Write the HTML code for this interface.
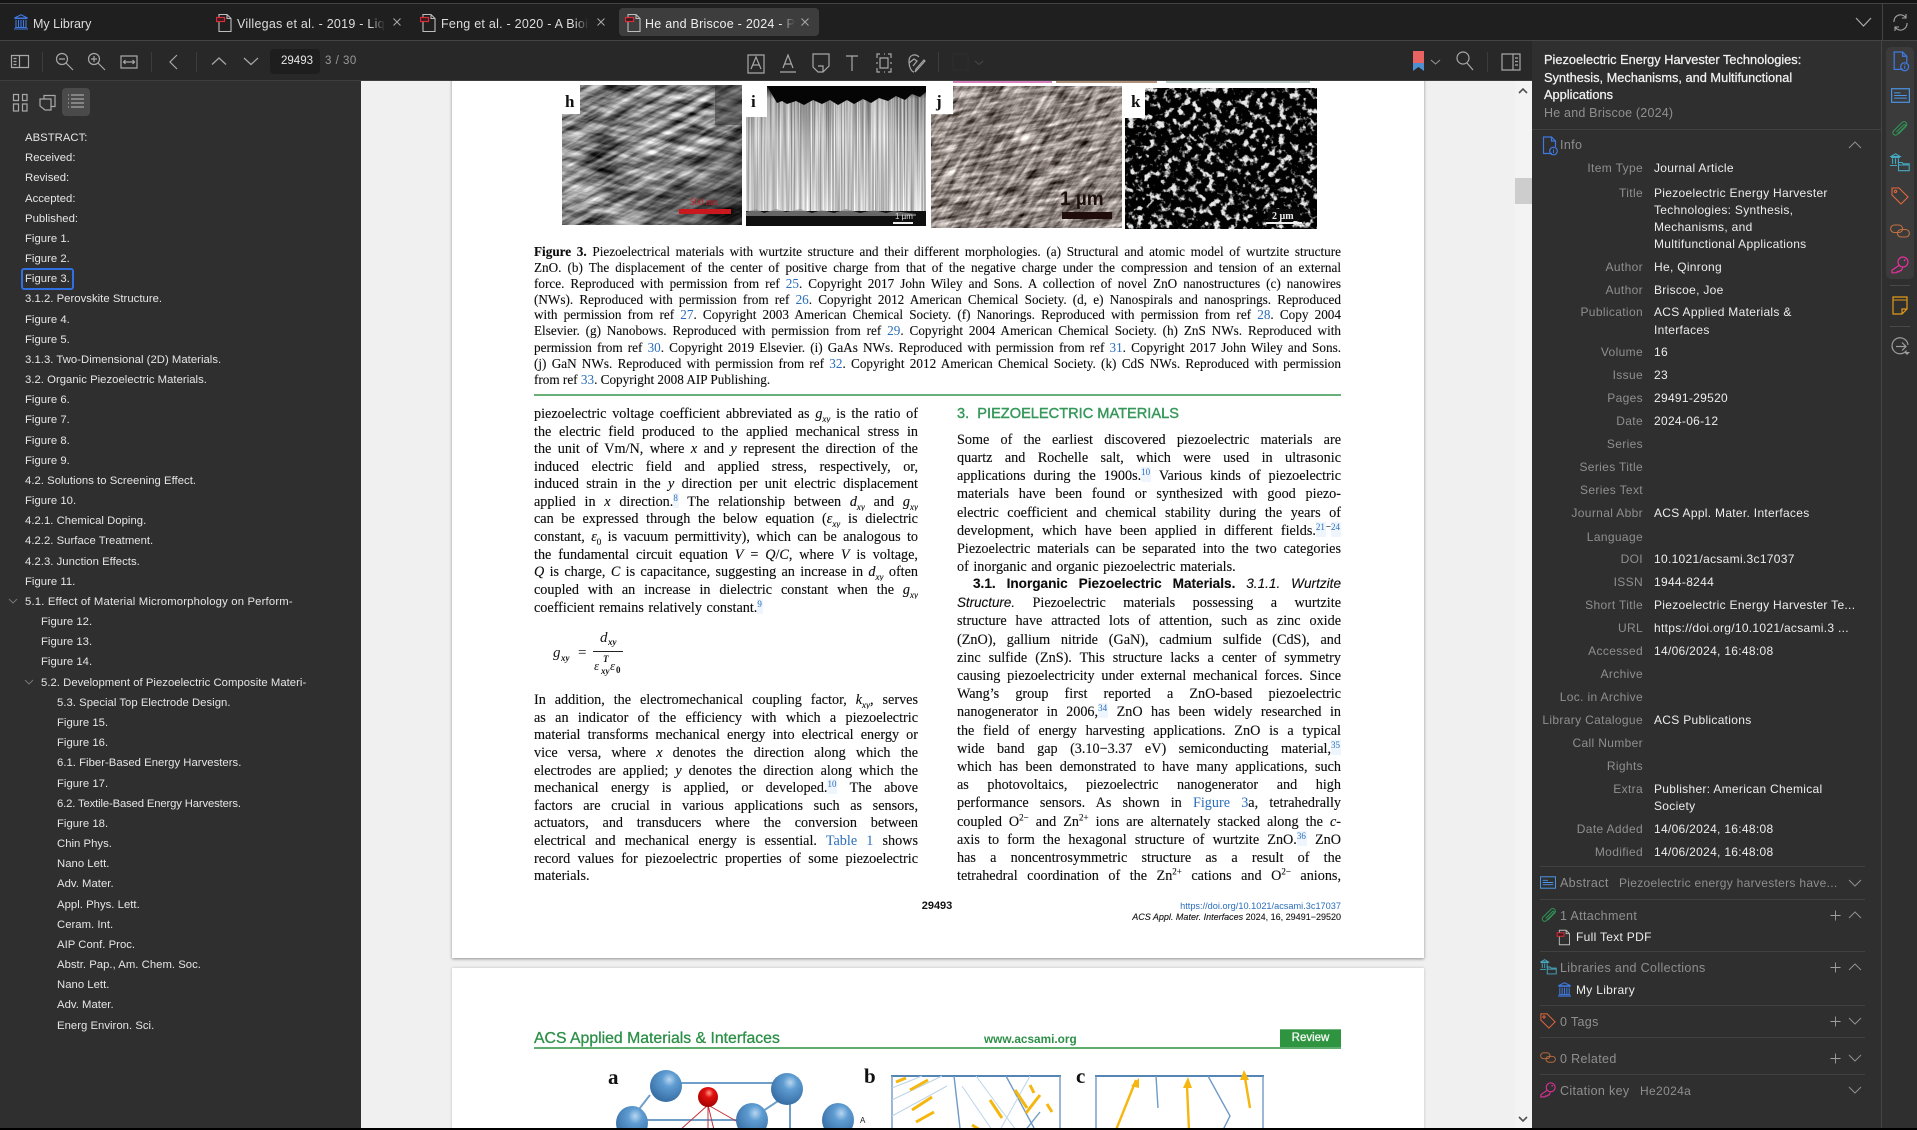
<!DOCTYPE html>
<html><head><meta charset="utf-8"><title>He and Briscoe - 2024</title>
<style>
html,body{margin:0;padding:0;background:#000}
#root{position:relative;width:1917px;height:1130px;overflow:hidden;background:#f0f0f0;font-family:"Liberation Sans",sans-serif;font-size:12px;color:#eee}
.a{position:absolute}
.t{position:absolute;white-space:nowrap;line-height:16px}
svg{position:absolute;overflow:visible}
.ic{fill:none;stroke:#a8a8a8;stroke-width:1.2}
#side div{height:20.18px;line-height:20.18px;font-size:11.3px;letter-spacing:.03px;color:#e6e6e6;white-space:nowrap}
.lb{position:absolute;left:1532px;width:111px;text-align:right;color:#8f8f8f;line-height:16px;white-space:nowrap;letter-spacing:.35px}
.v{position:absolute;left:1654px;color:#ededed;line-height:16px;white-space:nowrap;letter-spacing:.3px}
.sec{position:absolute;left:1560px;color:#8f8f8f;line-height:16px;font-size:12.5px;white-space:nowrap;letter-spacing:.35px}
.hr{position:absolute;left:1540px;width:325px;height:1px;background:#414141}
.l{position:absolute;height:18px;margin-top:1px;line-height:18px;font-family:"Liberation Serif",serif;font-size:14.2px;color:#0c0c0c;-webkit-text-stroke:.12px #0c0c0c;text-align:justify;text-align-last:justify;overflow:hidden;white-space:normal}
.L{left:534px;width:384px}.R{left:957px;width:384px}
.n{text-align-last:left}
.c{position:absolute;left:534px;width:807px;height:16px;line-height:16px;font-family:"Liberation Serif",serif;font-size:13.2px;color:#0c0c0c;-webkit-text-stroke:.1px #0c0c0c;text-align:justify;text-align-last:justify;overflow:hidden}
.b{color:#2a6ebb;-webkit-text-stroke:0}
s.r{text-decoration:none;font-size:9px;color:#2a6ebb;-webkit-text-stroke:0;background:#eef5fc;position:relative;top:-5px;line-height:0;padding:3px 1px 5px 0}
i sub,sub{font-size:9px;line-height:0}
sup{font-size:9px;line-height:0}
</style></head><body><div id="root">

<svg width="0" height="0" style="position:absolute">
<defs>
<filter id="fh" x="0" y="0" width="100%" height="100%" color-interpolation-filters="sRGB"><feTurbulence type="fractalNoise" baseFrequency=".16 .022" numOctaves="4" seed="4"/><feColorMatrix type="matrix" values="2 0 0 0 -.47 2 0 0 0 -.47 2 0 0 0 -.47 0 0 0 0 1"/></filter>
<filter id="fi" x="0" y="0" width="100%" height="100%" color-interpolation-filters="sRGB"><feTurbulence type="fractalNoise" baseFrequency=".7 .006" numOctaves="2" seed="8"/><feColorMatrix type="matrix" values="1 0 0 0 .28 1 0 0 0 .28 1 0 0 0 .28 0 0 0 0 1"/></filter>
<filter id="fj" x="0" y="0" width="100%" height="100%" color-interpolation-filters="sRGB"><feTurbulence type="fractalNoise" baseFrequency=".24 .04" numOctaves="4" seed="11"/><feColorMatrix type="matrix" values="1.7 0 0 0 -.29 1.7 0 0 0 -.33 1.7 0 0 0 -.35 0 0 0 0 1"/></filter>
<filter id="fk" x="0" y="0" width="100%" height="100%" color-interpolation-filters="sRGB"><feTurbulence type="fractalNoise" baseFrequency=".14" numOctaves="3" seed="21"/><feColorMatrix type="matrix" values="6 0 0 0 -3.15 6 0 0 0 -3.15 6 0 0 0 -3.15 0 0 0 0 1"/></filter>
<clipPath id="ch"><rect x="562" y="85" width="180" height="140"/></clipPath>
<clipPath id="cj"><rect x="931" y="86" width="191" height="142"/></clipPath>
<symbol id="pdf" viewBox="0 0 17 20"><path d="M3 1.5h8l4 4v13H3z" fill="none" stroke="#bdbdbd" stroke-width="1.1"/><path d="M11 1.5v4h4" fill="none" stroke="#bdbdbd" stroke-width="1.1"/><rect x=".5" y="4.5" width="8" height="4" fill="#3a1a1c" stroke="#d92b3a" stroke-width="1.2"/></symbol>
<symbol id="lib" viewBox="0 0 16 16"><path d="M8 .8 1.5 4h13zM1.5 4.6h13M3 6v7M5.5 6v7M8 6v7M10.5 6v7M13 6v7M1 15h14M2 13.5h12" fill="none" stroke="#3f78e0" stroke-width="1.1"/></symbol>
<symbol id="up" viewBox="0 0 14 8"><path d="M1 7l6-6 6 6" fill="none" stroke="#8f8f8f" stroke-width="1"/></symbol>
<symbol id="dn" viewBox="0 0 14 8"><path d="M1 1l6 6 6-6" fill="none" stroke="#8f8f8f" stroke-width="1"/></symbol>
<symbol id="pl" viewBox="0 0 12 12"><path d="M6 .5v11M.5 6h11" stroke="#a0a0a0" stroke-width="1"/></symbol>
<symbol id="x" viewBox="0 0 8 8"><path d="M.5.5l7 7M7.500.5l-7 7" stroke="#aaa" stroke-width="1"/></symbol>
<symbol id="info" viewBox="0 0 16 20"><path d="M10 17.5H1.5V1h8l4 4v6M9.5 1v4h4" fill="none" stroke="#3f78e0" stroke-width="1.2"/><circle cx="11.5" cy="15" r="3.8" fill="none" stroke="#3f78e0" stroke-width="1.2"/><path d="M11.5 14v3M11.5 12.6v.8" stroke="#3f78e0"/></symbol>
<symbol id="abs" viewBox="0 0 18 14"><rect x=".6" y=".6" width="16.8" height="12.8" fill="none" stroke="#4c97e8" stroke-width="1.1"/><path d="M3 4.5h6M3 7h12M3 9.5h12" stroke="#4c97e8" stroke-width="1"/></symbol>
<symbol id="clip" viewBox="0 0 18 18"><path d="M6 12 13 5c1.300-1.300 2.700.2 1.500 1.500L6.500 14.500c-2 2-5.500-1-3.500-3.500L11.500 2.500c2.500-2.500 6.500.8 4 3.800L8 14" fill="none" stroke="#2f9455" stroke-width="1.1"/></symbol>
<symbol id="col" viewBox="0 0 20 19"><path d="M5.5.8 1 3.4h9zM1 4.4h9M2.6 5.4v5.5M5.5 5.4v5.5M8.4 5.4v5.5M0 12.5h7" fill="none" stroke="#46a8c0" stroke-width="1.1"/><path d="M8.5 17.7V9.5h3.5l1.2 1.3h6v6.9z M8.5 12h10.7" fill="none" stroke="#46a8c0" stroke-width="1.1"/></symbol>
<symbol id="tag" viewBox="0 0 18 18"><path d="M1 1h7l9 9-7 7-9-9zM4.5 3.2a1.2 1.2 0 1 0 .01 0" fill="none" stroke="#e4683c" stroke-width="1.1"/></symbol>
<symbol id="rel" viewBox="0 0 20 14"><rect x=".6" y="1" width="12" height="7.500" rx="3.750" fill="none" stroke="#c2703f" stroke-width="1.1"/><rect x="7.400" y="5.500" width="12" height="7.500" rx="3.750" fill="none" stroke="#c2703f" stroke-width="1.1"/></symbol>
<symbol id="key" viewBox="0 0 18 18"><circle cx="12" cy="6" r="5" fill="none" stroke="#e6319c" stroke-width="1.2"/><circle cx="13.700" cy="4.300" r=".9" fill="#e6319c"/><path d="M8.300 9.200 1 14.200v2.600h4.300l1.200-1.300 1.300.5 1.200-1.500 1.300.2 1.300-3" fill="none" stroke="#e6319c" stroke-width="1.2"/></symbol>
</defs></svg>

<!-- PDF pages -->
<div class="a" style="left:361px;top:81px;width:1171px;height:1049px;background:#f0f0f0"></div>
<div class="a" style="left:1515px;top:81px;width:17px;height:1049px;background:#f3f3f3"></div>
<div class="a" style="left:1515px;top:178px;width:17px;height:26px;background:#cdcdcd"></div>
<svg style="left:1518px;top:87px" width="10" height="7"><path d="M1 6 5 2l4 4" fill="none" stroke="#505050" stroke-width="1.6"/></svg>
<svg style="left:1518px;top:1116px" width="10" height="7"><path d="M1 1l4 4 4-4" fill="none" stroke="#505050" stroke-width="1.6"/></svg>

<div class="a" style="left:452px;top:70px;width:972px;height:888px;background:#fff;box-shadow:0 1px 3px rgba(0,0,0,.4)"></div>
<div class="a" style="left:452px;top:968px;width:972px;height:170px;background:#fff;box-shadow:0 0 3px rgba(0,0,0,.2)"></div>

<!-- top strip previous figure -->
<div class="a" style="left:953px;top:81px;width:99px;height:2px;background:#d580bb"></div>
<div class="a" style="left:1056px;top:81px;width:101px;height:2px;background:#b09078"></div>
<div class="a" style="left:1166px;top:81px;width:144px;height:2px;background:#b8c8c0"></div>

<!-- figure images -->
<svg style="left:0;top:0" width="1917" height="400">
<defs>
<linearGradient id="gh" x1="0" y1="0" x2="1" y2="1"><stop offset="0" stop-color="#000" stop-opacity="0"/><stop offset=".6" stop-color="#000" stop-opacity=".03"/><stop offset="1" stop-color="#000" stop-opacity=".68"/></linearGradient>
<linearGradient id="gi" x1="0" y1="0" x2="0" y2="1"><stop offset="0" stop-color="#000" stop-opacity=".9"/><stop offset=".1" stop-color="#000" stop-opacity=".2"/><stop offset=".4" stop-color="#000" stop-opacity=".05"/><stop offset="1" stop-color="#fff" stop-opacity=".12"/></linearGradient>
</defs>
<g clip-path="url(#ch)">
<rect x="562" y="85" width="180" height="140" fill="#808080"/>
<rect x="482" y="-15" width="340" height="340" transform="rotate(62 652 155)" filter="url(#fh)"/>
<rect x="482" y="-15" width="340" height="340" transform="rotate(100 652 155)" filter="url(#fh)" opacity=".4"/>
<rect x="562" y="85" width="180" height="140" fill="url(#gh)"/>
<rect x="715" y="85" width="27" height="40" fill="#222" opacity=".45"/>
</g>
<rect x="562" y="85" width="18" height="29" fill="#fff"/>
<rect x="679" y="209" width="52" height="5" fill="#c9181e"/>
<text x="690" y="205" font-family="Liberation Serif,serif" font-size="9" fill="#c9181e">500 nm</text>

<rect x="746" y="86" width="180" height="140" filter="url(#fi)"/>
<rect x="746" y="86" width="180" height="128" fill="url(#gi)"/>
<path d="M767 86h159v6l-6 5-8-3-7 6-9-4-8 5-9-3-8 5-8-4-9 5-7-4-9 5-8-5-8 4-9-4-9 5-8-4-9 3-5-3-5 2z" fill="#050505"/>
<rect x="746" y="211" width="180" height="15" fill="#0f0f0f"/>
<path d="M746 212l10-3 8 4 12-4 10 3 14-3 12 4 10-3 12 3 12-4 14 4 14-3 12 3 8-2 22 3v2H746z" fill="#8d8d8d" opacity=".7"/>
<rect x="746" y="86" width="21" height="31" fill="#fff"/>
<rect x="893" y="222" width="20" height="2" fill="#eee"/>
<text x="895" y="219" font-family="Liberation Sans,sans-serif" font-size="8" fill="#ddd">1 µm</text>

<g clip-path="url(#cj)">
<rect x="931" y="86" width="191" height="142" fill="#8f8580"/>
<rect x="846" y="-43" width="360" height="360" transform="rotate(78 1026 137)" filter="url(#fj)"/>
<rect x="846" y="-43" width="360" height="360" transform="rotate(35 1026 137)" filter="url(#fj)" opacity=".45"/>
</g>
<rect x="931" y="86" width="22" height="28" fill="#fff"/>
<text x="1060" y="205" font-family="Liberation Sans,sans-serif" font-size="19" fill="#1c0f0c" font-weight="bold">1 µm</text>
<rect x="1062" y="212" width="50" height="7" fill="#200c0b"/>

<rect x="1125" y="88" width="192" height="141" fill="#0b0b0b"/>
<rect x="1125" y="88" width="192" height="141" filter="url(#fk)" opacity=".9"/>
<rect x="1125" y="88" width="20" height="30" fill="#fff"/>
<rect x="1266" y="222" width="36" height="2" fill="#eee"/>
<rect x="1268" y="209" width="32" height="12" fill="#0b0b0b"/>
<text x="1272" y="219" font-family="Liberation Serif,serif" font-weight="bold" font-size="10" fill="#eee">2 µm</text>

<g font-family="Liberation Serif,serif" font-weight="bold" font-size="17" fill="#111">
<text x="565" y="107">h</text><text x="751" y="107">i</text><text x="936" y="107">j</text><text x="1131" y="107">k</text></g>
<rect x="534" y="394" width="807" height="2" fill="#68b078"/>
</svg>

<!-- caption -->
<div class="c" style="top:244px"><b>Figure 3.</b> Piezoelectrical materials with wurtzite structure and their different morphologies. (a) Structural and atomic model of wurtzite structure</div>
<div class="c" style="top:260px">ZnO. (b) The displacement of the center of positive charge from that of the negative charge under the compression and tension of an external</div>
<div class="c" style="top:276px">force. Reproduced with permission from ref <span class="b">25</span>. Copyright 2017 John Wiley and Sons. A collection of novel ZnO nanostructures (c) nanowires</div>
<div class="c" style="top:292px">(NWs). Reproduced with permission from ref <span class="b">26</span>. Copyright 2012 American Chemical Society. (d, e) Nanospirals and nanosprings. Reproduced</div>
<div class="c" style="top:307px">with permission from ref <span class="b">27</span>. Copyright 2003 American Chemical Society. (f) Nanorings. Reproduced with permission from ref <span class="b">28</span>. Copy 2004</div>
<div class="c" style="top:323px">Elsevier. (g) Nanobows. Reproduced with permission from ref <span class="b">29</span>. Copyright 2004 American Chemical Society. (h) ZnS NWs. Reproduced with</div>
<div class="c" style="top:340px">permission from ref <span class="b">30</span>. Copyright 2019 Elsevier. (i) GaAs NWs. Reproduced with permission from ref <span class="b">31</span>. Copyright 2017 John Wiley and Sons.</div>
<div class="c" style="top:356px">(j) GaN NWs. Reproduced with permission from ref <span class="b">32</span>. Copyright 2012 American Chemical Society. (k) CdS NWs. Reproduced with permission</div>
<div class="c" style="top:372px;text-align-last:left">from ref <span class="b">33</span>. Copyright 2008 AIP Publishing.</div>

<!-- left column -->
<div class="l L" style="top:404px">piezoelectric voltage coefficient abbreviated as <i>g<sub>xy</sub></i> is the ratio of</div>
<div class="l L" style="top:422px">the electric field produced to the applied mechanical stress in</div>
<div class="l L" style="top:439px">the unit of Vm/N, where <i>x</i> and <i>y</i> represent the direction of the</div>
<div class="l L" style="top:457px">induced electric field and applied stress, respectively, or,</div>
<div class="l L" style="top:474px">induced strain in the <i>y</i> direction per unit electric displacement</div>
<div class="l L" style="top:492px">applied in <i>x</i> direction.<s class="r">8</s> The relationship between <i>d<sub>xy</sub></i> and <i>g<sub>xy</sub></i></div>
<div class="l L" style="top:509px">can be expressed through the below equation (<i>ε<sub>xy</sub></i> is dielectric</div>
<div class="l L" style="top:527px">constant, <i>ε</i><sub>0</sub> is vacuum permittivity), which can be analogous to</div>
<div class="l L" style="top:545px">the fundamental circuit equation <i>V</i> = <i>Q</i>/<i>C</i>, where <i>V</i> is voltage,</div>
<div class="l L" style="top:562px"><i>Q</i> is charge, <i>C</i> is capacitance, suggesting an increase in <i>d<sub>xy</sub></i> often</div>
<div class="l L" style="top:580px">coupled with an increase in dielectric constant when the <i>g<sub>xy</sub></i></div>
<div class="l L n" style="top:598px;word-spacing:1px">coefficient remains relatively constant.<s class="r">9</s></div>

<svg style="left:0;top:0" width="1917" height="700" font-family="Liberation Serif,serif" fill="#151515">
<text x="553" y="657" font-size="15" font-style="italic">g</text><text x="561" y="661" font-size="9" font-style="italic" font-weight="bold">xy</text>
<text x="578" y="657" font-size="15">=</text>
<text x="600" y="642" font-size="15" font-style="italic">d</text><text x="608" y="645" font-size="9" font-style="italic" font-weight="bold">xy</text>
<rect x="593" y="651" width="30" height="1" fill="#222"/>
<text x="594" y="670" font-size="13" font-style="italic">ε</text><text x="603" y="662" font-size="9" font-style="italic" font-weight="bold">T</text><text x="601" y="674" font-size="9" font-style="italic" font-weight="bold">xy</text><text x="610" y="670" font-size="13" font-style="italic">ε</text><text x="616" y="673" font-size="9" font-weight="bold">0</text>
</svg>

<div class="l L" style="top:690px">In addition, the electromechanical coupling factor, <i>k<sub>xy</sub></i>, serves</div>
<div class="l L" style="top:708px">as an indicator of the efficiency with which a piezoelectric</div>
<div class="l L" style="top:725px">material transforms mechanical energy into electrical energy or</div>
<div class="l L" style="top:743px">vice versa, where <i>x</i> denotes the direction along which the</div>
<div class="l L" style="top:761px">electrodes are applied; <i>y</i> denotes the direction along which the</div>
<div class="l L" style="top:778px">mechanical energy is applied, or developed.<s class="r">10</s> The above</div>
<div class="l L" style="top:796px">factors are crucial in various applications such as sensors,</div>
<div class="l L" style="top:813px">actuators, and transducers where the conversion between</div>
<div class="l L" style="top:831px">electrical and mechanical energy is essential. <span class="b">Table 1</span> shows</div>
<div class="l L" style="top:849px">record values for piezoelectric properties of some piezoelectric</div>
<div class="l L n" style="top:866px">materials.</div>

<!-- right column -->
<div class="t" style="left:957px;top:405px;line-height:18px;font-size:14.6px;color:#36985a;-webkit-text-stroke:.4px #36985a">3.&nbsp; PIEZOELECTRIC MATERIALS</div>
<div class="l R" style="top:430px">Some of the earliest discovered piezoelectric materials are</div>
<div class="l R" style="top:448px">quartz and Rochelle salt, which were used in ultrasonic</div>
<div class="l R" style="top:466px">applications during the 1900s.<s class="r">10</s> Various kinds of piezoelectric</div>
<div class="l R" style="top:484px">materials have been found or synthesized with good piezo-</div>
<div class="l R" style="top:503px">electric coefficient and chemical stability during the years of</div>
<div class="l R" style="top:521px">development, which have been applied in different fields.<s class="r">21</s><sup>−</sup><s class="r">24</s></div>
<div class="l R" style="top:539px">Piezoelectric materials can be separated into the two categories</div>
<div class="l R n" style="top:557px;word-spacing:1px">of inorganic and organic piezoelectric materials.</div>
<div class="l R" style="top:574px;padding-left:16px;width:368px;font-family:'Liberation Sans',sans-serif;font-size:13.6px"><b>3.1. Inorganic Piezoelectric Materials.</b> <i>3.1.1. Wurtzite</i></div>
<div class="l R" style="top:593px"><i style="font-family:'Liberation Sans',sans-serif;font-size:13.4px">Structure.</i> Piezoelectric materials possessing a wurtzite</div>
<div class="l R" style="top:611px">structure have attracted lots of attention, such as zinc oxide</div>
<div class="l R" style="top:630px">(ZnO), gallium nitride (GaN), cadmium sulfide (CdS), and</div>
<div class="l R" style="top:648px">zinc sulfide (ZnS). This structure lacks a center of symmetry</div>
<div class="l R" style="top:666px">causing piezoelectricity under external mechanical forces. Since</div>
<div class="l R" style="top:684px">Wang’s group first reported a ZnO-based piezoelectric</div>
<div class="l R" style="top:702px">nanogenerator in 2006,<s class="r">34</s> ZnO has been widely researched in</div>
<div class="l R" style="top:721px">the field of energy harvesting applications. ZnO is a typical</div>
<div class="l R" style="top:739px">wide band gap (3.10−3.37 eV) semiconducting material,<s class="r">35</s></div>
<div class="l R" style="top:757px">which has been demonstrated to have many applications, such</div>
<div class="l R" style="top:775px">as photovoltaics, piezoelectric nanogenerator and high</div>
<div class="l R" style="top:793px">performance sensors. As shown in <span class="b">Figure 3</span>a, tetrahedrally</div>
<div class="l R" style="top:812px">coupled O<sup>2−</sup> and Zn<sup>2+</sup> ions are alternately stacked along the <i>c</i>-</div>
<div class="l R" style="top:830px">axis to form the hexagonal structure of wurtzite ZnO.<s class="r">36</s> ZnO</div>
<div class="l R" style="top:848px">has a noncentrosymmetric structure as a result of the</div>
<div class="l R" style="top:866px">tetrahedral coordination of the Zn<sup>2+</sup> cations and O<sup>2−</sup> anions,</div>

<!-- footer -->
<div class="t" style="left:900px;width:74px;text-align:center;top:898px;font-size:11px;font-weight:bold;color:#111">29493</div>
<div class="t" style="left:1000px;width:341px;text-align:right;top:898px;font-size:9.2px;color:#2a6ebb">https://doi.org/10.1021/acsami.3c17037</div>
<div class="t" style="left:1000px;width:341px;text-align:right;top:909px;font-size:9px;color:#111;-webkit-text-stroke:.1px #111"><i>ACS Appl. Mater. Interfaces</i> 2024, 16, 29491−29520</div>

<!-- page 2 -->
<div class="t" style="left:534px;top:1031px;font-size:15.8px;color:#2c8f48;-webkit-text-stroke:.3px #2c8f48">ACS Applied Materials &amp; Interfaces</div>
<div class="t" style="left:984px;top:1031px;font-size:11.8px;color:#2c8f48;font-weight:bold">www.acsami.org</div>
<div class="a" style="left:1280px;top:1029px;width:61px;height:18px;background:#2e9440;border-top:1px solid #6fb57f;box-sizing:border-box"></div>
<div class="t" style="left:1280px;width:61px;text-align:center;top:1030px;font-size:11.5px;color:#f3f8f3;-webkit-text-stroke:.3px #f3f8f3">Review</div>
<div class="a" style="left:534px;top:1047px;width:807px;height:2px;background:#5fae6f"></div>
<svg style="left:0;top:0" width="1917" height="1130">
<defs><radialGradient id="sb" cx=".6" cy=".3" r=".75"><stop offset="0" stop-color="#b8d6f0"/><stop offset=".3" stop-color="#5e9cd2"/><stop offset="1" stop-color="#33699f"/></radialGradient>
<radialGradient id="sr" cx=".55" cy=".3" r=".75"><stop offset="0" stop-color="#ff9a8a"/><stop offset=".3" stop-color="#e01010"/><stop offset="1" stop-color="#a00000"/></radialGradient></defs>
<g font-family="Liberation Serif,serif" font-weight="bold" font-size="21" fill="#111"><text x="608" y="1084">a</text><text x="864" y="1083">b</text><text x="1076" y="1083">c</text></g>
<g stroke="#6f9fc9" stroke-width="2" fill="none"><path d="M666 1083h121M632 1120h120M650 1095l-14 18M787 1095l-30 20M790 1100v30"/></g>
<path d="M708 1105 680 1130M708 1105l44 25M708 1105v25M708 1105l6 25" stroke="#c0323a" fill="none"/>
<ellipse cx="666" cy="1086" rx="16" ry="16" fill="url(#sb)"/><ellipse cx="787" cy="1089" rx="16" ry="16" fill="url(#sb)"/>
<ellipse cx="632" cy="1123" rx="16" ry="17" fill="url(#sb)"/><ellipse cx="752" cy="1120" rx="16" ry="17" fill="url(#sb)"/><ellipse cx="838" cy="1120" rx="16" ry="17" fill="url(#sb)"/>
<ellipse cx="708" cy="1097" rx="10" ry="10" fill="url(#sr)"/>
<text x="860" y="1123" font-family="Liberation Sans,sans-serif" font-size="8" fill="#222">A</text>
<path d="M891 1076h170M1095 1076h169" stroke="#5585b5" stroke-width="2"/>
<path d="M892 1076v56M1060 1076v56M1096 1076v56M1263 1076v56" stroke="#6f9bc5" stroke-width="1.4" fill="none"/>
<path d="M954 1076l6 52M1006 1076l28 52M1040 1112l-16 20M1156 1076l2 32M1208 1076l22 40-8 16" stroke="#6f9bc5" stroke-width="1.4" fill="none"/>
<path d="M892 1088l30-12M892 1100l50-24M892 1116l55-30M962 1086l30 44M976 1076l40 54M1030 1076l-30 54" stroke="#bcd4e6" fill="none"/>
<g stroke="#f5b60f" stroke-width="3" fill="none"><path d="M896 1082l10-4M910 1090l18-10M912 1110l20-13M916 1122l18-10M990 1100l12 18M1015 1090l12 18M1040 1095l-14 18M1030 1085l4 8M1052 1112l-5-8M972 1125l8 5"/></g>
<g stroke="#f5b60f" stroke-width="2.4" fill="none"><path d="M1116 1130l20-50M1189 1130l-2-44M1250 1108l-5-30"/></g>
<path d="M1139 1078l-8 8 8 2zM1183 1088h9l-4-11zM1240 1080h9l-5-10z" fill="#f5b60f"/>
</svg>

<!-- tab bar -->
<div class="a" style="left:0;top:0;width:1917px;height:3px;background:#151515"></div>
<div class="a" style="left:0;top:3px;width:1917px;height:1px;background:#444"></div>
<div class="a" style="left:0;top:4px;width:1917px;height:36px;background:#1f1f1f"></div>
<div class="a" style="left:0;top:40px;width:1917px;height:1px;background:#444"></div>
<div class="a" style="left:619px;top:8px;width:200px;height:28px;border-radius:4px;background:#3d3d3d"></div>
<svg style="left:13px;top:14px" width="16" height="17"><use href="#lib" width="16" height="16"/></svg>
<div class="t" style="left:33px;top:16px;font-size:12.5px;color:#ddd">My Library</div>
<svg style="left:216px;top:13px" width="17" height="20"><use href="#pdf" width="17" height="20"/></svg>
<div class="t" style="left:237px;top:16px;width:148px;overflow:hidden;font-size:12.5px;letter-spacing:.25px;color:#ddd;-webkit-mask-image:linear-gradient(90deg,#000 90%,transparent)">Villegas et al. - 2019 - Liquid crystal</div>
<svg style="left:393px;top:18px" width="8" height="8"><use href="#x" width="8" height="8"/></svg>
<svg style="left:420px;top:13px" width="17" height="20"><use href="#pdf" width="17" height="20"/></svg>
<div class="t" style="left:441px;top:16px;width:148px;overflow:hidden;font-size:12.5px;letter-spacing:.25px;color:#ddd;-webkit-mask-image:linear-gradient(90deg,#000 90%,transparent)">Feng et al. - 2020 - A Bioinspired</div>
<svg style="left:597px;top:18px" width="8" height="8"><use href="#x" width="8" height="8"/></svg>
<svg style="left:625px;top:13px" width="17" height="20"><use href="#pdf" width="17" height="20"/></svg>
<div class="t" style="left:645px;top:16px;width:150px;overflow:hidden;font-size:12.5px;letter-spacing:.25px;color:#eee;-webkit-mask-image:linear-gradient(90deg,#000 90%,transparent)">He and Briscoe - 2024 - Piezoelectric</div>
<svg style="left:801px;top:18px" width="8" height="8"><use href="#x" width="8" height="8"/></svg>
<svg style="left:1855px;top:17px" width="17" height="10"><path d="M1 1l7.5 8L16 1" fill="none" stroke="#aaa" stroke-width="1.2"/></svg>
<div class="a" style="left:1882px;top:4px;width:1px;height:36px;background:#444"></div>
<svg style="left:1892px;top:13px" width="17" height="19"><path d="M2 9A6.5 6.5 0 0 1 13.5 4.2M15 10a6.5 6.5 0 0 1-11.6 4.6M14 1v4h-4M3 18v-4h4" fill="none" stroke="#a5a5a5" stroke-width="1.1"/></svg>

<!-- toolbar -->
<div class="a" style="left:0;top:41px;width:1532px;height:40px;background:#282828"></div>
<div class="a" style="left:0;top:80px;width:1532px;height:1px;background:#3e3e3e"></div>
<svg style="left:0;top:41px" width="1532" height="40">
<g class="ic">
<path d="M11.5 14.5h17v12h-17zM19.5 14.5v12M13.5 17.5h3M13.5 20.5h3M13.5 23.5h3"/>
<circle cx="62" cy="18" r="5.5"/><path d="M66 22l7 7M59 18h6"/>
<circle cx="94" cy="18" r="5.5"/><path d="M98 22l7 7M91 18h6M94 15v6"/>
<path d="M121 15h16v12h-16zM123.5 21h11M125.5 19l-2 2 2 2M132.5 19l2 2-2 2"/>
<path d="M177 14l-7 7 7 7"/>
<path d="M212 23.5l7-6.5 7 6.5M244 17l7 6.500 7-6.500"/>
<path d="M748 14h16v18h-16zM751 28l5-12 5 12M752.500 24h7"/>
<path d="M783 27l5-13 5 13M785 23h6M780 31h16"/>
<path d="M813 13h16v12l-6 6h-5l-5-5zM823 31v-6h-5"/>
<path d="M846 15h12M852 15v15"/>
<path d="M877 17v-4h3M888 13h3v4M891 27v4h-3M880 31h-3v-4M884 13h1M884 31h1M877 21v2M891 21v2M880 17h8v10h-8z"/>
<path d="M919 16c-4-4-10-2-10 4 0 7 3 11 5 11M909 22l5-4 3 2-4 5M925 20l-8 9-2 2 1-3 8-9z"/>
</g>
<g stroke="#3c3c3c"><path d="M42.500 11v20M151.500 11v20M196.500 11v20M938.500 11v20M1487.500 11v20"/></g>
<rect x="953" y="13" width="15" height="16" fill="none" stroke="#2e2e2e"/>
<path d="M975 20l4 3.500 4-3.500" fill="none" stroke="#4a4a4a"/>
<path d="M1413 10h11v20l-5.500-4-5.500 4z" fill="#4d8ed0"/><path d="M1413 10h11v12h-11z" fill="#ea6363"/>
<path d="M1431 19l4.500 4 4.500-4" fill="none" stroke="#999"/>
<g class="ic"><circle cx="1463" cy="17" r="6"/><path d="M1467 22l6 7M1502 13h18v16h-18zM1513 13v16M1515 17h3M1515 20.500h3M1515 24h3"/></g>
</svg>
<div class="a" style="left:270px;top:49px;width:50px;height:25px;border-radius:4px;background:#1e1e1e"></div>
<div class="t" style="left:270px;top:53px;width:43px;text-align:right;font-size:11.5px;color:#e6e6e6">29493</div>
<div class="t" style="left:325px;top:53px;font-size:11.5px;color:#999;letter-spacing:.5px">3 / 30</div>

<!-- left sidebar -->
<div class="a" style="left:0;top:81px;width:361px;height:1047px;background:#2f2f2f"></div>
<div class="a" style="left:62px;top:88px;width:28px;height:28px;border-radius:4px;background:#4a4a4a"></div>
<svg style="left:0;top:81px" width="100" height="40"><g class="ic">
<path d="M13.500 13.500h5v6h-5zM22.500 13.500h4.500v6h-4.500zM13.500 23h5v7h-5zM22.500 23h4.500v7h-4.500z"/>
<path d="M40 18h11v11h-6l-5-4zM44 18v-3.500h11v11h-4"/>
<path d="M71 14h13M71 18h13M71 22h13M71 26h13" stroke-width="1.300"/><path d="M68 14h1M68 18h1M68 22h1M68 26h1"/></g></svg>
<div class="a" style="left:21px;top:268px;width:53px;height:22px;border:2px solid #2f6fe0;border-radius:3px;box-sizing:border-box"></div>
<svg style="left:0;top:0" width="40" height="700"><path d="M9 599l4 4 4-4M25 680l4 4 4-4" fill="none" stroke="#777"/></svg>
<div id="side" class="a" style="left:0;top:128px;width:361px">
<div style="padding-left:25px">ABSTRACT:</div><div style="padding-left:25px">Received:</div><div style="padding-left:25px">Revised:</div><div style="padding-left:25px">Accepted:</div><div style="padding-left:25px">Published:</div><div style="padding-left:25px">Figure 1.</div><div style="padding-left:25px">Figure 2.</div><div style="padding-left:25px">Figure 3.</div><div style="padding-left:25px">3.1.2. Perovskite Structure.</div><div style="padding-left:25px">Figure 4.</div><div style="padding-left:25px">Figure 5.</div><div style="padding-left:25px">3.1.3. Two-Dimensional (2D) Materials.</div><div style="padding-left:25px">3.2. Organic Piezoelectric Materials.</div><div style="padding-left:25px">Figure 6.</div><div style="padding-left:25px">Figure 7.</div><div style="padding-left:25px">Figure 8.</div><div style="padding-left:25px">Figure 9.</div><div style="padding-left:25px">4.2. Solutions to Screening Effect.</div><div style="padding-left:25px">Figure 10.</div><div style="padding-left:25px">4.2.1. Chemical Doping.</div><div style="padding-left:25px">4.2.2. Surface Treatment.</div><div style="padding-left:25px">4.2.3. Junction Effects.</div><div style="padding-left:25px">Figure 11.</div><div style="padding-left:25px;letter-spacing:.17px">5.1. Effect of Material Micromorphology on Perform-</div>
<div style="padding-left:41px">Figure 12.</div><div style="padding-left:41px">Figure 13.</div><div style="padding-left:41px">Figure 14.</div><div style="padding-left:41px">5.2. Development of Piezoelectric Composite Materi-</div>
<div style="padding-left:57px">5.3. Special Top Electrode Design.</div><div style="padding-left:57px">Figure 15.</div><div style="padding-left:57px">Figure 16.</div><div style="padding-left:57px">6.1. Fiber-Based Energy Harvesters.</div><div style="padding-left:57px">Figure 17.</div><div style="padding-left:57px;letter-spacing:-.15px">6.2. Textile-Based Energy Harvesters.</div><div style="padding-left:57px">Figure 18.</div><div style="padding-left:57px">Chin Phys.</div><div style="padding-left:57px">Nano Lett.</div><div style="padding-left:57px">Adv. Mater.</div><div style="padding-left:57px">Appl. Phys. Lett.</div><div style="padding-left:57px">Ceram. Int.</div><div style="padding-left:57px">AIP Conf. Proc.</div><div style="padding-left:57px">Abstr. Pap., Am. Chem. Soc.</div><div style="padding-left:57px">Nano Lett.</div><div style="padding-left:57px">Adv. Mater.</div><div style="padding-left:57px">Energ Environ. Sci.</div>
</div>

<!-- right panel -->
<div class="a" style="left:1532px;top:41px;width:349px;height:1087px;background:#2f2f2f"></div>
<div class="a" style="left:1881px;top:40px;width:1px;height:1088px;background:#444"></div>
<div class="a" style="left:1882px;top:41px;width:35px;height:1087px;background:#2f2f2f"></div>
<div class="a" style="left:1886px;top:47px;width:28px;height:232px;border-radius:5px;background:#3b3b3b"></div>
<div class="a" style="left:1532px;top:129px;width:349px;height:1px;background:#414141"></div>
<div class="t" style="left:1544px;top:51px;font-size:12.8px;line-height:17.500px;color:#f2f2f2;-webkit-text-stroke:.25px #f2f2f2">Piezoelectric Energy Harvester Technologies:<br>Synthesis, Mechanisms, and Multifunctional<br>Applications</div>
<div class="t" style="left:1544px;top:105px;font-size:12.500px;color:#8f8f8f;letter-spacing:.2px">He and Briscoe (2024)</div>
<svg style="left:1542px;top:136px" width="16" height="20"><use href="#info" width="16" height="20"/></svg>
<div class="sec" style="top:137px">Info</div>
<svg style="left:1848px;top:141px" width="14" height="8"><use href="#up" width="14" height="8"/></svg>

<div class="lb" style="top:160px">Item Type</div><div class="v" style="top:160px">Journal Article</div>
<div class="lb" style="top:185px">Title</div><div class="v" style="top:184.500px;line-height:17px">Piezoelectric Energy Harvester<br>Technologies: Synthesis,<br>Mechanisms, and<br>Multifunctional Applications</div>
<div class="lb" style="top:259px">Author</div><div class="v" style="top:259px">He, Qinrong</div>
<div class="lb" style="top:282px">Author</div><div class="v" style="top:282px">Briscoe, Joe</div>
<div class="lb" style="top:304px">Publication</div><div class="v" style="top:304px;line-height:17.500px">ACS Applied Materials &amp;<br>Interfaces</div>
<div class="lb" style="top:344px">Volume</div><div class="v" style="top:344px">16</div>
<div class="lb" style="top:367px">Issue</div><div class="v" style="top:367px">23</div>
<div class="lb" style="top:390px">Pages</div><div class="v" style="top:390px">29491-29520</div>
<div class="lb" style="top:413px">Date</div><div class="v" style="top:413px">2024-06-12</div>
<div class="lb" style="top:436px">Series</div>
<div class="lb" style="top:459px">Series Title</div>
<div class="lb" style="top:482px">Series Text</div>
<div class="lb" style="top:505px">Journal Abbr</div><div class="v" style="top:505px">ACS Appl. Mater. Interfaces</div>
<div class="lb" style="top:529px">Language</div>
<div class="lb" style="top:551px">DOI</div><div class="v" style="top:551px">10.1021/acsami.3c17037</div>
<div class="lb" style="top:574px">ISSN</div><div class="v" style="top:574px">1944-8244</div>
<div class="lb" style="top:597px">Short Title</div><div class="v" style="top:597px">Piezoelectric Energy Harvester Te...</div>
<div class="lb" style="top:620px">URL</div><div class="v" style="top:620px">https://doi.org/10.1021/acsami.3 ...</div>
<div class="lb" style="top:643px">Accessed</div><div class="v" style="top:643px">14/06/2024, 16:48:08</div>
<div class="lb" style="top:666px">Archive</div>
<div class="lb" style="top:689px">Loc. in Archive</div>
<div class="lb" style="top:712px">Library Catalogue</div><div class="v" style="top:712px">ACS Publications</div>
<div class="lb" style="top:735px">Call Number</div>
<div class="lb" style="top:758px">Rights</div>
<div class="lb" style="top:781px">Extra</div><div class="v" style="top:781px;line-height:17px">Publisher: American Chemical<br>Society</div>
<div class="lb" style="top:821px">Date Added</div><div class="v" style="top:821px">14/06/2024, 16:48:08</div>
<div class="lb" style="top:844px">Modified</div><div class="v" style="top:844px">14/06/2024, 16:48:08</div>

<div class="hr" style="top:866px"></div><div class="hr" style="top:899px"></div><div class="hr" style="top:951px"></div><div class="hr" style="top:1005px"></div><div class="hr" style="top:1037px"></div><div class="hr" style="top:1074px"></div>

<svg style="left:1540px;top:876px" width="16" height="13"><use href="#abs" width="16" height="13"/></svg>
<div class="sec" style="top:875px">Abstract</div><div class="sec" style="top:875px;left:1619px;font-size:12px;letter-spacing:.3px">Piezoelectric energy harvesters have...</div>
<svg style="left:1848px;top:879px" width="14" height="8"><use href="#dn" width="14" height="8"/></svg>

<svg style="left:1540px;top:907px" width="17" height="17"><use href="#clip" width="17" height="17"/></svg>
<div class="sec" style="top:908px">1 Attachment</div>
<svg style="left:1830px;top:910px" width="11" height="11"><use href="#pl" width="11" height="11"/></svg>
<svg style="left:1848px;top:911px" width="14" height="8"><use href="#up" width="14" height="8"/></svg>
<svg style="left:1556px;top:929px" width="16" height="17"><use href="#pdf" width="16" height="17"/></svg>
<div class="v" style="top:929px;left:1576px">Full Text PDF</div>

<svg style="left:1540px;top:959px" width="17" height="16"><use href="#col" width="17" height="16"/></svg>
<div class="sec" style="top:960px">Libraries and Collections</div>
<svg style="left:1830px;top:962px" width="11" height="11"><use href="#pl" width="11" height="11"/></svg>
<svg style="left:1848px;top:963px" width="14" height="8"><use href="#up" width="14" height="8"/></svg>
<svg style="left:1557px;top:982px" width="15" height="15"><use href="#lib" width="15" height="15"/></svg>
<div class="v" style="top:982px;left:1576px">My Library</div>

<svg style="left:1540px;top:1013px" width="16" height="16"><use href="#tag" width="16" height="16"/></svg>
<div class="sec" style="top:1014px">0 Tags</div>
<svg style="left:1830px;top:1016px" width="11" height="11"><use href="#pl" width="11" height="11"/></svg>
<svg style="left:1848px;top:1017px" width="14" height="8"><use href="#dn" width="14" height="8"/></svg>

<svg style="left:1540px;top:1052px" width="16" height="11"><use href="#rel" width="16" height="11"/></svg>
<div class="sec" style="top:1051px">0 Related</div>
<svg style="left:1830px;top:1053px" width="11" height="11"><use href="#pl" width="11" height="11"/></svg>
<svg style="left:1848px;top:1054px" width="14" height="8"><use href="#dn" width="14" height="8"/></svg>

<svg style="left:1540px;top:1082px" width="16" height="16"><use href="#key" width="16" height="16"/></svg>
<div class="sec" style="top:1083px">Citation key</div><div class="sec" style="top:1083px;left:1640px;font-size:12px">He2024a</div>
<svg style="left:1848px;top:1086px" width="14" height="8"><use href="#dn" width="14" height="8"/></svg>

<!-- right icon strip -->
<svg style="left:1892px;top:51px" width="18" height="21"><use href="#info" width="18" height="21"/></svg>
<svg style="left:1891px;top:88px" width="19" height="15"><use href="#abs" width="19" height="15"/></svg>
<svg style="left:1890px;top:120px" width="19" height="18"><use href="#clip" width="19" height="18"/></svg>
<svg style="left:1890px;top:153px" width="20" height="19"><use href="#col" width="20" height="19"/></svg>
<svg style="left:1891px;top:187px" width="18" height="18"><use href="#tag" width="18" height="18"/></svg>
<svg style="left:1890px;top:224px" width="20" height="14"><use href="#rel" width="20" height="14"/></svg>
<svg style="left:1891px;top:256px" width="18" height="18"><use href="#key" width="18" height="18"/></svg>
<div class="a" style="left:1890px;top:285px;width:20px;height:1px;background:#484848"></div>
<svg style="left:1892px;top:296px" width="16" height="20"><path d="M1 1h14v12l-5 5H1zM15 13h-5v5" fill="none" stroke="#e09a18" stroke-width="1.200"/><path d="M1 4h14" stroke="#e09a18"/></svg>
<div class="a" style="left:1890px;top:326px;width:20px;height:1px;background:#484848"></div>
<svg style="left:1891px;top:337px" width="20" height="20"><path d="M15.500 13.500A8 8 0 1 1 17 8M5 9.500h10M11 5.500l4 4-4 4" fill="none" stroke="#9c9c9c" stroke-width="1.200"/><path d="M13 15h6l-3 3z" fill="#9c9c9c"/></svg>

<!-- bottom strip -->
<div class="a" style="left:0;top:1128px;width:1917px;height:2px;background:#000"></div>
</div></body></html>
